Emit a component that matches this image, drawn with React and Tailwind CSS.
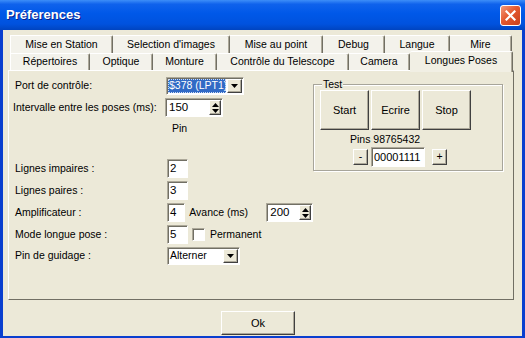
import React from 'react';

const raised =
  'border border-t-white border-l-white border-r-[#404040] border-b-[#404040] shadow-[inset_-1px_-1px_0_#ACA899]';
const sunken =
  'border border-t-[#ACA899] border-l-[#ACA899] border-r-white border-b-white shadow-[inset_1px_1px_0_#716F64]';

const DownArrow = () => (
  <svg width="7" height="4" viewBox="0 0 7 4">
    <path d="M0 0h7L3.5 4z" fill="#000" />
  </svg>
);

const Tab = ({ label, w }) => (
  <div
    style={{ width: w }}
    className="h-full shrink-0 flex items-center justify-center bg-[#F3F2EB] border-t border-t-white border-r border-r-[#716F64] shadow-[inset_-1px_0_0_#ACA899] rounded-tr-[2px] whitespace-nowrap"
  >
    {label}
  </div>
);

const Combo = ({ value, w, selected }) => (
  <div style={{ width: w }} className={`h-[18px] bg-white flex items-stretch p-[1px] ${sunken}`}>
    <div
      className={`flex-1 overflow-hidden whitespace-nowrap flex items-center pl-[1px] ${
        selected ? 'bg-[#316AC5] text-white outline-1 outline-dotted outline-[#CEDDF5] -outline-offset-1' : ''
      }`}
    >
      {value}
    </div>
    <div className={`w-[15px] ml-[1px] bg-[#ECE9D8] flex items-center justify-center ${raised}`}>
      <DownArrow />
    </div>
  </div>
);

const Spin = ({ value, w }) => (
  <div style={{ width: w }} className={`h-[19px] bg-white flex items-stretch p-[1px] ${sunken}`}>
    <span className="flex-1 pl-[2px] text-[11.5px] flex items-center">{value}</span>
    <div className={`w-[12px] bg-[#ECE9D8] flex flex-col items-center justify-center gap-[2px] ${raised}`}>
      <svg width="7" height="4" viewBox="0 0 7 4">
        <path d="M0 4h7L3.5 0z" fill="#000" />
      </svg>
      <DownArrow />
    </div>
  </div>
);

const Field = ({ value }) => (
  <div className={`w-[21px] h-[19px] bg-white flex items-center pl-[2px] text-[11.5px] ${sunken}`}>{value}</div>
);

const Row = ({ label, className = '', children }) => (
  <div className={`flex items-center h-[19px] ${className}`}>
    <span className="w-[152px] shrink-0 whitespace-nowrap">{label}</span>
    {children}
  </div>
);

export default function App() {
  return (
    <div className="w-[525px] h-[338px] bg-[#0A3FCF] flex flex-col overflow-hidden font-['Liberation_Sans',Arial,sans-serif] text-[10.5px] text-black">
      {/* title bar */}
      <div className="h-[30px] shrink-0 flex items-center justify-between pl-[6px] pr-[4px] bg-[linear-gradient(to_bottom,#3D8EF8_0%,#0F62EC_14%,#0058E8_45%,#0052DE_80%,#0044C0_100%)]">
        <span className="text-white font-bold text-[13px] [text-shadow:1px_1px_0_#0A1F8A]">Préferences</span>
        <div className="w-[21px] h-[21px] rounded-[3px] border border-white bg-[linear-gradient(135deg,#F29A7C_0%,#E4592F_45%,#C8401C_100%)] flex items-center justify-center">
          <svg width="11" height="11" viewBox="0 0 11 11">
            <path d="M1.5 1.5l8 8M9.5 1.5l-8 8" stroke="#fff" strokeWidth="2.2" strokeLinecap="square" />
          </svg>
        </div>
      </div>

      {/* body */}
      <div className="flex-1 mx-[3px] mb-[2px] bg-[#ECE9D8] flex flex-col">
        <div className="pl-[7px] pt-[5px]">
          <div className="flex h-[18px] [&>div:first-child]:border-l [&>div:first-child]:border-l-white">
            <Tab label="Mise en Station" w={103} />
            <Tab label="Selection d'images" w={117} />
            <Tab label="Mise au point" w={93} />
            <Tab label="Debug" w={62} />
            <Tab label="Langue" w={65} />
            <Tab label="Mire" w={62} />
          </div>
          <div className="flex h-[17px] items-start [&>div:first-child]:border-l [&>div:first-child]:border-l-white">
            <Tab label="Répertoires" w={80} />
            <Tab label="Optique" w={63} />
            <Tab label="Monture" w={64} />
            <Tab label="Contrôle du Telescope" w={132} />
            <Tab label="Camera" w={61} />
            <div className="relative z-10 -mt-[2px] w-[103px] h-[21px] pb-[3px] flex items-center justify-center bg-[#F1EFE4] border-t border-t-white border-r border-r-[#716F64] shadow-[inset_-1px_0_0_#ACA899] rounded-t-[2px] whitespace-nowrap">
              Longues Poses
            </div>
          </div>
        </div>

        {/* tab page */}
        <div className="ml-[5px] mr-[8px] h-[230px] bg-[#ECE9D8] border border-t-white border-l-white border-r-[#716F64] border-b-[#716F64] flex">
          <div className="w-[304px] shrink-0 flex flex-col pl-[6px]">
            <div className="mt-[6px] h-[18px] flex items-center">
              <span className="w-[151px] shrink-0">Port de contrôle:</span>
              <Combo value="$378 (LPT1)" w={78} selected />
            </div>
            <Row label="Intervalle entre les poses (ms):" className="mt-[3px] -ml-[2px]">
              <Spin value="150" w={58} />
            </Row>
            <div className="mt-[5px] h-[14px] pl-[157px] flex items-center">Pin</div>
            <Row label="Lignes impaires :" className="mt-[23px]">
              <Field value="2" />
            </Row>
            <Row label="Lignes paires :" className="mt-[3px]">
              <Field value="3" />
            </Row>
            <Row label="Amplificateur :" className="mt-[3px]">
              <Field value="4" />
              <span className="ml-[4px] w-[77px] shrink-0">Avance (ms)</span>
              <Spin value="200" w={55} />
            </Row>
            <Row label="Mode longue pose :" className="mt-[3px]">
              <Field value="5" />
              <div className={`ml-[4px] w-[13px] h-[13px] bg-white ${sunken}`} />
              <span className="ml-[5px]">Permanent</span>
            </Row>
            <div className="mt-[3px] h-[18px] flex items-center">
              <span className="w-[152px] shrink-0">Pin de guidage :</span>
              <Combo value="Alterner" w={73} />
            </div>
          </div>

          {/* Test group */}
          <div className="relative mt-[13px] w-[190px] h-[87px] border border-[#A7A59A] shadow-[inset_1px_1px_0_#fff,1px_1px_0_#fff]">
            <span className="absolute -top-[7px] left-[8px] px-[1px] leading-[12px] bg-[#ECE9D8]">Test</span>
            <div className="flex gap-[2px] pl-[6px] pt-[5px]">
              {['Start', 'Ecrire', 'Stop'].map((b) => (
                <div key={b} className={`w-[49px] h-[40px] bg-[#ECE9D8] flex items-center justify-center text-[11px] ${raised}`}>
                  {b}
                </div>
              ))}
            </div>
            <div className="mt-[4px] h-[12px] pl-[36px] flex items-center">Pins 98765432</div>
            <div className="mt-[1px] h-[20px] pl-[39px] flex items-center">
              <div className={`w-[15px] h-[16px] bg-[#ECE9D8] flex items-center justify-center ${raised}`}>-</div>
              <div className={`ml-[3px] w-[54px] h-[20px] bg-white flex items-center pl-[2px] text-[11px] ${sunken}`}>00001111</div>
              <div className={`ml-[7px] w-[15px] h-[16px] bg-[#ECE9D8] flex items-center justify-center ${raised}`}>+</div>
            </div>
          </div>
        </div>

        <div className="pl-[218px] pt-[11px]">
          <div className={`w-[74px] h-[24px] bg-[#ECE9D8] flex items-center justify-center text-[11px] ${raised}`}>Ok</div>
        </div>
      </div>
    </div>
  );
}
